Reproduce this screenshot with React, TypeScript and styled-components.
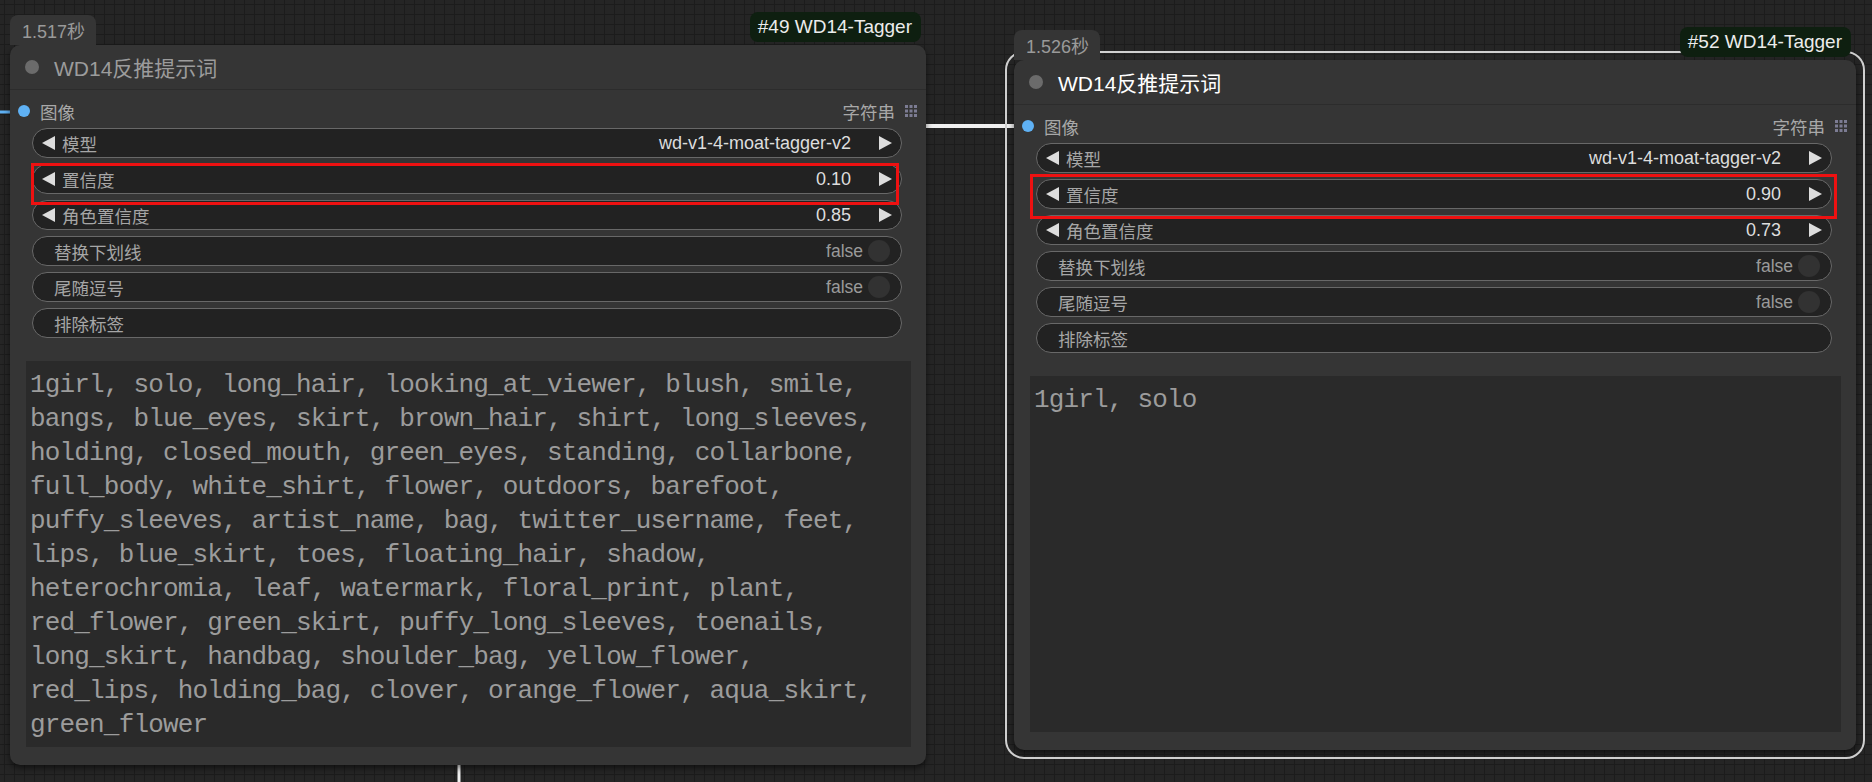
import React from "react";
import styled, { createGlobalStyle } from "styled-components";

const GlobalStyle = createGlobalStyle`
  html, body { margin: 0; padding: 0; background: #232323; }
  body {
    font-family: "Liberation Sans", Arial, "Noto Sans CJK SC", sans-serif;
    overflow: hidden;
  }
  * { box-sizing: border-box; }
`;

const Canvas = styled.div`
  position: relative;
  width: 1872px;
  height: 782px;
  overflow: hidden;
  background-color: #252525;
  background-image:
    linear-gradient(#1c1c1c 1px, transparent 1px),
    linear-gradient(90deg, #1c1c1c 1px, transparent 1px);
  background-size: 10px 10px;
  background-position: 4px 4px;
`;

const LinkLayer = styled.svg`
  position: absolute;
  left: 0;
  top: 0;
  width: 1872px;
  height: 782px;
  pointer-events: none;
`;

const NodeWrap = styled.div`
  position: absolute;
  display: flex;
  flex-direction: column;
`;

const NodeHeader = styled.div`
  display: flex;
  justify-content: space-between;
  align-items: flex-end;
`;

const TimeBadge = styled.div`
  position: relative;
  z-index: 1;
  height: 30px;
  padding: 0 11px 0 12px;
  display: flex;
  align-items: center;
  background: #353535;
  border-radius: 8px 8px 0 0;
  color: #9a9a9a;
  font-size: 18px;
`;

const IdBadge = styled.div`
  position: relative;
  z-index: 1;
  height: 30px;
  margin: 0 5px 3px 0;
  padding: 0 9px 0 8px;
  display: flex;
  align-items: center;
  background: #0e1f10;
  border-radius: 8px;
  color: #ececec;
  font-size: 19px;
`;

const NodeBox = styled.div<{ $selected?: boolean; $height: number }>`
  position: relative;
  height: ${(p) => p.$height}px;
  display: flex;
  flex-direction: column;
  background: #353535;
  border-radius: 10px;
  box-shadow: 0 3px 6px rgba(0, 0, 0, 0.55);
  ${(p) =>
    p.$selected
      ? `&::before {
    content: "";
    position: absolute;
    inset: -9px;
    border: 2px solid #cfcfcf;
    border-radius: 19px;
    pointer-events: none;
  }`
      : ""}
`;

const TitleBar = styled.div`
  height: 45px;
  flex: none;
  display: flex;
  align-items: center;
  padding-left: 15px;
  gap: 15px;
  border-bottom: 1px solid #2c2c2c;
`;

const StatusDot = styled.span`
  width: 14px;
  height: 14px;
  border-radius: 50%;
  background: #6b6b6b;
`;

const TitleText = styled.span<{ $selected?: boolean }>`
  font-size: 21px;
  color: ${(p) => (p.$selected ? "#ffffff" : "#9c9c9c")};
`;

const NodeBody = styled.div`
  flex: 1;
  display: flex;
  flex-direction: column;
  padding-top: 10px;
  min-height: 0;
`;

const SlotRow = styled.div`
  height: 22px;
  display: flex;
  align-items: center;
  padding: 0 9px 0 8px;
  font-size: 17.5px;
  color: #a8a8a8;
`;

const SlotDot = styled.span`
  width: 12px;
  height: 12px;
  border-radius: 50%;
  background: #5fb1f4;
  margin-right: 10px;
`;

const SlotType = styled.span`
  margin-left: auto;
  margin-right: 10px;
`;

const WidgetList = styled.div`
  display: flex;
  flex-direction: column;
  gap: 6px;
  margin: 6px 24px 0 22px;
`;

const Widget = styled.div<{ $kind: "combo" | "toggle" | "text" }>`
  height: 30px;
  display: flex;
  align-items: center;
  background: #222222;
  border: 1px solid #686868;
  border-radius: 15px;
  padding: ${(p) => (p.$kind === "combo" ? "0 9px" : "0 11px 0 21px")};
  font-size: 17.5px;
`;

const ArrowIcon = styled.svg`
  width: 13px;
  height: 14px;
  flex: none;
  fill: #dddddd;
`;

const WidgetLabel = styled.span<{ $indent?: boolean }>`
  color: #a6a6a6;
  margin-left: ${(p) => (p.$indent ? "7px" : "0")};
`;

const WidgetValue = styled.span<{ $dim?: boolean }>`
  margin-left: auto;
  color: ${(p) => (p.$dim ? "#9a9a9a" : "#dddddd")};
  font-size: ${(p) => (p.$dim ? "17.5px" : "18px")};
`;

const RightArrow = styled(ArrowIcon)`
  margin-left: 28px;
`;

const ToggleKnob = styled.span`
  width: 22px;
  height: 22px;
  border-radius: 50%;
  background: #323232;
  margin-left: 5px;
`;

const TextBox = styled.div`
  flex: 1;
  margin: 23px 15px 18px 16px;
  background: #2a2a2a;
  padding: 7px 4px;
  font-family: "Liberation Mono", "DejaVu Sans Mono", monospace;
  font-size: 26px;
  letter-spacing: -0.83px;
  line-height: 34px;
  color: #9c9c9c;
  white-space: pre;
  overflow: hidden;
`;

const Highlight = styled.div`
  position: absolute;
  border: 3px solid #ee1111;
  pointer-events: none;
  z-index: 5;
`;

const LeftArrow = () => (
  <ArrowIcon viewBox="0 0 13 14">
    <polygon points="13,0 13,14 0,7" />
  </ArrowIcon>
);

const NextArrow = () => (
  <RightArrow viewBox="0 0 13 14">
    <polygon points="0,0 0,14 13,7" />
  </RightArrow>
);

const GridIcon = () => (
  <svg width="12" height="12" viewBox="0 0 12 12">
    {[0, 4.5, 9].map((x) =>
      [0, 4.5, 9].map((y) => (
        <rect key={`${x}-${y}`} x={x} y={y} width="3" height="3" fill="#7c7c93" />
      ))
    )}
  </svg>
);

type NodeData = {
  id: number;
  time: string;
  x: number;
  y: number;
  width: number;
  height: number;
  selected: boolean;
  threshold: string;
  charThreshold: string;
  text: string[];
};

const leftText = [
  "1girl, solo, long_hair, looking_at_viewer, blush, smile,",
  "bangs, blue_eyes, skirt, brown_hair, shirt, long_sleeves,",
  "holding, closed_mouth, green_eyes, standing, collarbone,",
  "full_body, white_shirt, flower, outdoors, barefoot,",
  "puffy_sleeves, artist_name, bag, twitter_username, feet,",
  "lips, blue_skirt, toes, floating_hair, shadow,",
  "heterochromia, leaf, watermark, floral_print, plant,",
  "red_flower, green_skirt, puffy_long_sleeves, toenails,",
  "long_skirt, handbag, shoulder_bag, yellow_flower,",
  "red_lips, holding_bag, clover, orange_flower, aqua_skirt,",
  "green_flower",
];

const nodes: NodeData[] = [
  {
    id: 49,
    time: "1.517秒",
    x: 10,
    y: 12,
    width: 916,
    height: 720,
    selected: false,
    threshold: "0.10",
    charThreshold: "0.85",
    text: leftText,
  },
  {
    id: 52,
    time: "1.526秒",
    x: 1014,
    y: 27,
    width: 842,
    height: 690,
    selected: true,
    threshold: "0.90",
    charThreshold: "0.73",
    text: ["1girl, solo"],
  },
];

const TaggerNode = ({ node }: { node: NodeData }) => (
  <NodeWrap style={{ left: node.x, top: node.y, width: node.width }}>
    <NodeHeader>
      <TimeBadge>{node.time}</TimeBadge>
      <IdBadge>#{node.id} WD14-Tagger</IdBadge>
    </NodeHeader>
    <NodeBox $selected={node.selected} $height={node.height}>
      <TitleBar>
        <StatusDot />
        <TitleText $selected={node.selected}>WD14反推提示词</TitleText>
      </TitleBar>
      <NodeBody>
        <SlotRow>
          <SlotDot />
          <span>图像</span>
          <SlotType>字符串</SlotType>
          <GridIcon />
        </SlotRow>
        <WidgetList>
          <Widget $kind="combo">
            <LeftArrow />
            <WidgetLabel $indent>模型</WidgetLabel>
            <WidgetValue>wd-v1-4-moat-tagger-v2</WidgetValue>
            <NextArrow />
          </Widget>
          <Widget $kind="combo">
            <LeftArrow />
            <WidgetLabel $indent>置信度</WidgetLabel>
            <WidgetValue>{node.threshold}</WidgetValue>
            <NextArrow />
          </Widget>
          <Widget $kind="combo">
            <LeftArrow />
            <WidgetLabel $indent>角色置信度</WidgetLabel>
            <WidgetValue>{node.charThreshold}</WidgetValue>
            <NextArrow />
          </Widget>
          <Widget $kind="toggle">
            <WidgetLabel>替换下划线</WidgetLabel>
            <WidgetValue $dim>false</WidgetValue>
            <ToggleKnob />
          </Widget>
          <Widget $kind="toggle">
            <WidgetLabel>尾随逗号</WidgetLabel>
            <WidgetValue $dim>false</WidgetValue>
            <ToggleKnob />
          </Widget>
          <Widget $kind="text">
            <WidgetLabel>排除标签</WidgetLabel>
          </Widget>
        </WidgetList>
        <TextBox>{node.text.join("\n")}</TextBox>
      </NodeBody>
    </NodeBox>
  </NodeWrap>
);

export default function App() {
  return (
    <>
      <GlobalStyle />
      <Canvas>
        <LinkLayer viewBox="0 0 1872 782">
          <line x1="0" y1="112" x2="14" y2="112" stroke="#5fb1f4" strokeWidth="3" />
          <line x1="920" y1="126" x2="1020" y2="126" stroke="#f0f0f0" strokeWidth="4" />
          <line x1="459" y1="760" x2="459" y2="782" stroke="#f0f0f0" strokeWidth="3" />
        </LinkLayer>
        {nodes.map((n) => (
          <TaggerNode key={n.id} node={n} />
        ))}
        <Highlight style={{ left: 31, top: 163, width: 868, height: 42 }} />
        <Highlight style={{ left: 1030, top: 174, width: 807, height: 45 }} />
      </Canvas>
    </>
  );
}
